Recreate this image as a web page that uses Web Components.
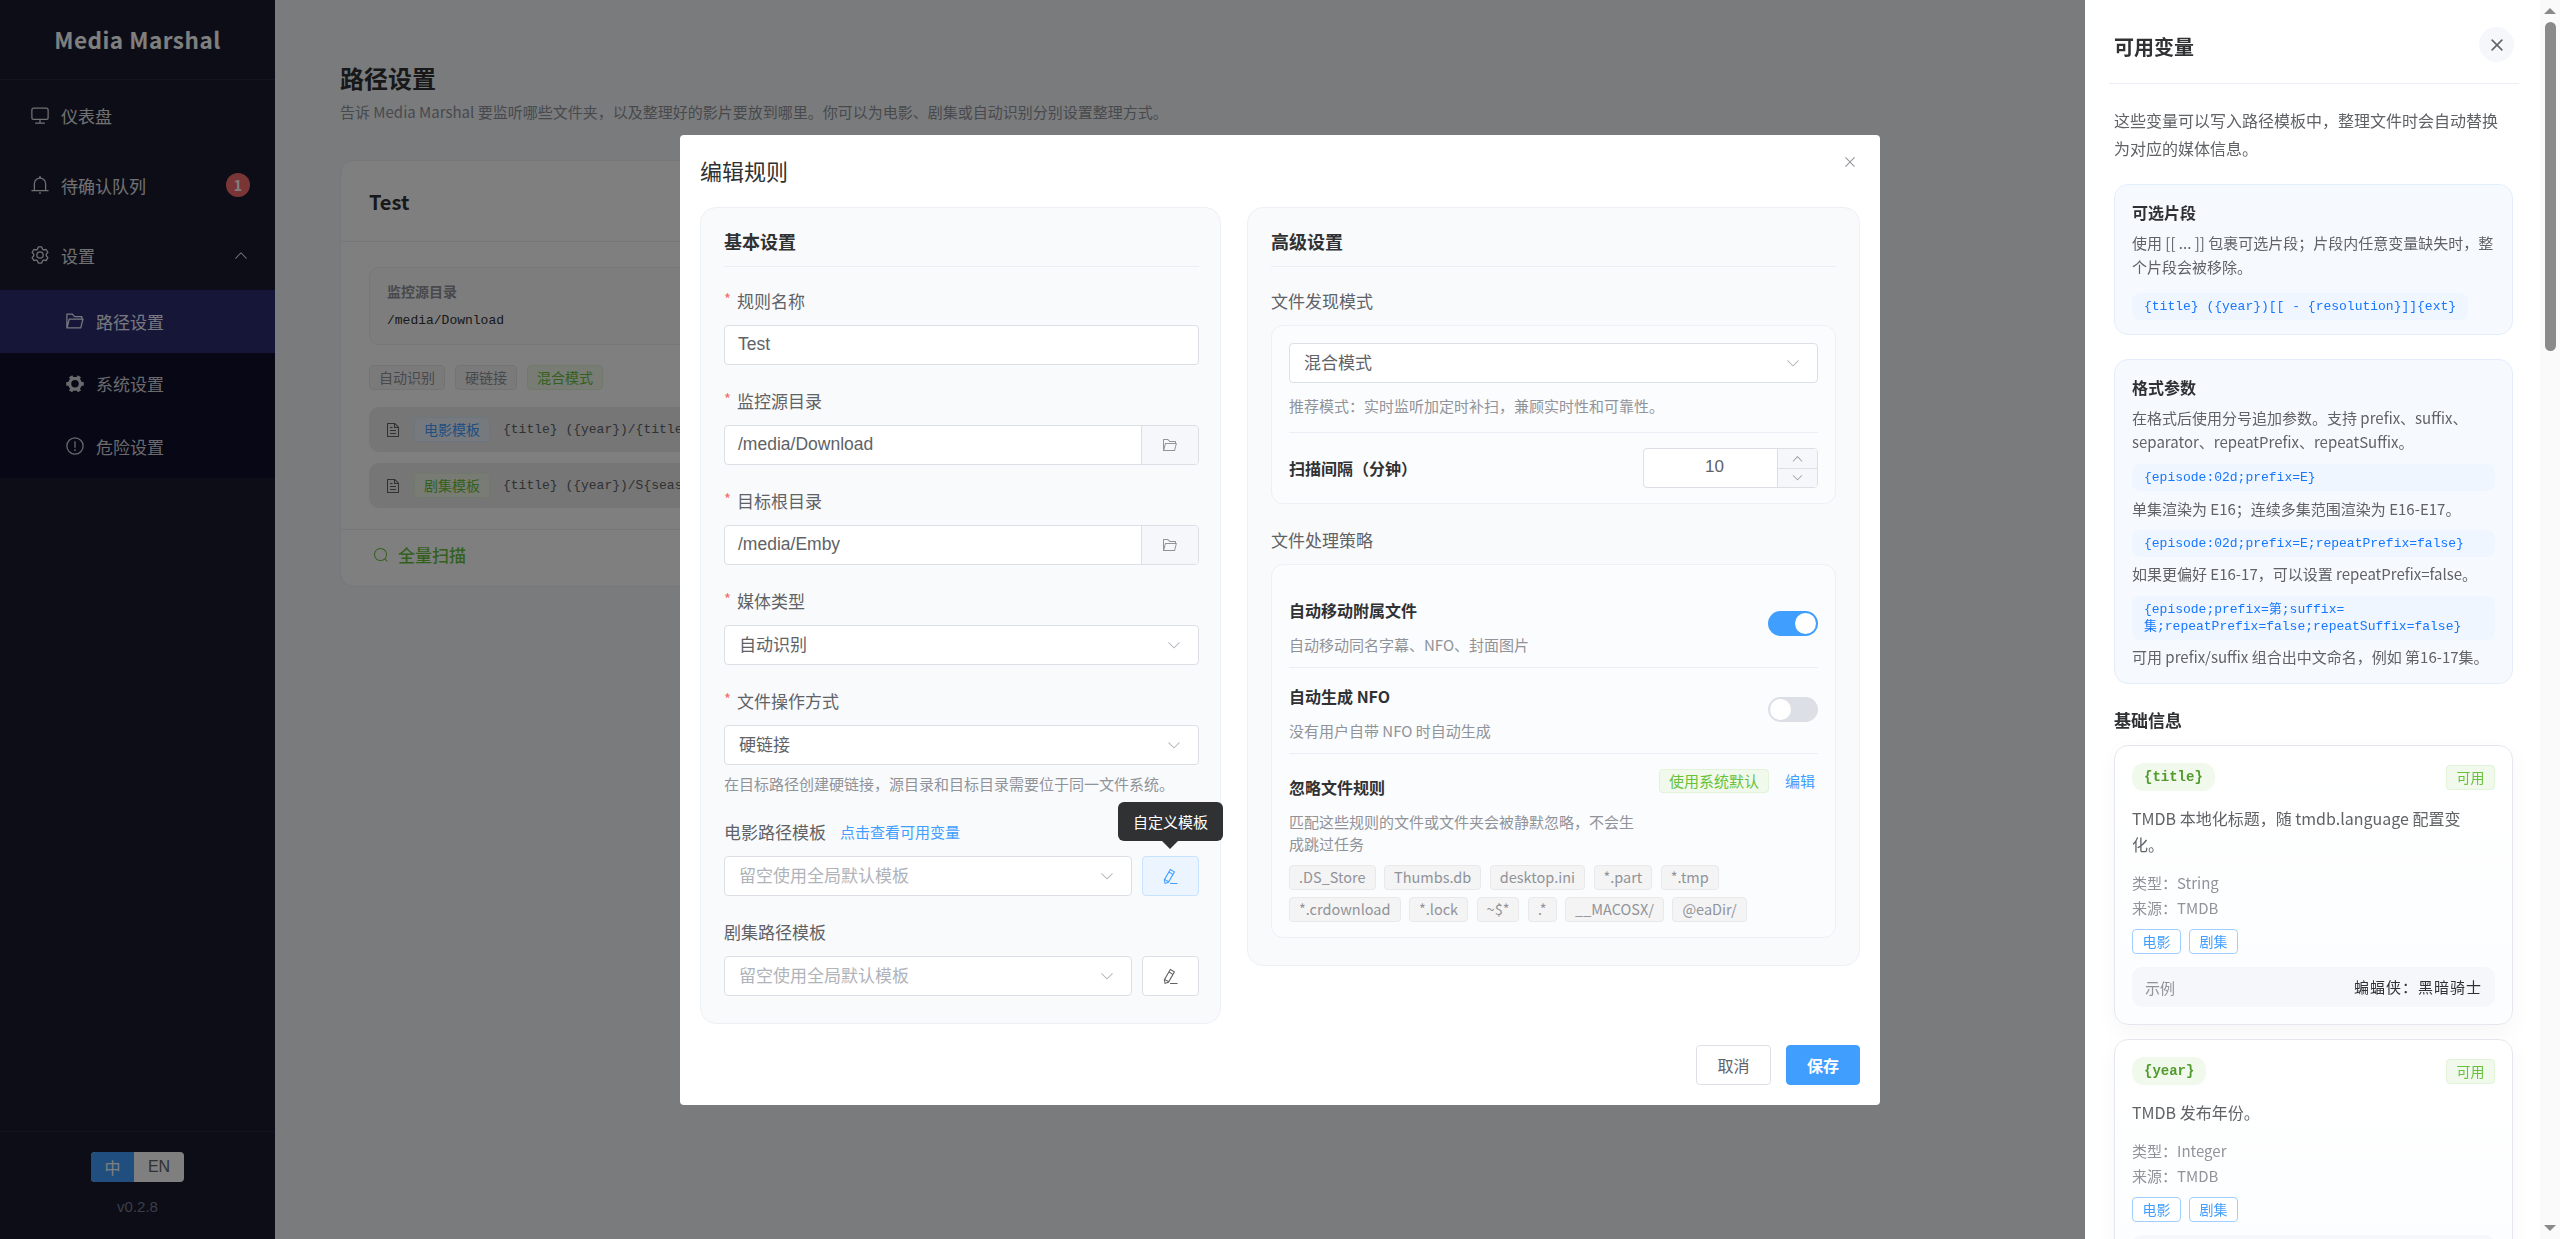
<!DOCTYPE html>
<html lang="zh">
<head>
<meta charset="utf-8">
<title>Media Marshal</title>
<style>
  html, body { margin: 0; height: 100%; overflow: hidden; }
  body { font-family: "Noto Sans CJK SC", "Noto Sans", sans-serif; color: #303133; background: #f5f7fa; }
</style>
</head>
<body>
<mm-app>
  <mm-sidebar slot="side">
    <mm-menu-item icon="monitor">仪表盘</mm-menu-item>
    <mm-menu-item icon="bell">待确认队列<mm-badge slot="extra">1</mm-badge></mm-menu-item>
    <mm-menu-item icon="setting">设置<mm-icon slot="extra" name="up" size="16" style="margin-right:-4px"></mm-icon></mm-menu-item>
    <mm-submenu>
      <mm-menu-item icon="folder" sub active>路径设置</mm-menu-item>
      <mm-menu-item icon="tools" sub>系统设置</mm-menu-item>
      <mm-menu-item icon="warning" sub>危险设置</mm-menu-item>
    </mm-submenu>
  </mm-sidebar>

  <mm-page-head>
    <span slot="title">路径设置</span>
    告诉 Media Marshal 要监听哪些文件夹，以及整理好的影片要放到哪里。你可以为电影、剧集或自动识别分别设置整理方式。
  </mm-page-head>
  <mm-rule-card></mm-rule-card>
</mm-app>

<mm-overlay></mm-overlay>

<mm-dialog>
  <span slot="title">编辑规则</span>

  <mm-panel heading="基本设置" style="padding-right:21px">
    <mm-field label="规则名称" required><mm-input value="Test"></mm-input></mm-field>
    <mm-field label="监控源目录" required><mm-input value="/media/Download" browse></mm-input></mm-field>
    <mm-field label="目标根目录" required><mm-input value="/media/Emby" browse></mm-input></mm-field>
    <mm-field label="媒体类型" required><mm-select value="自动识别"></mm-select></mm-field>
    <mm-field label="文件操作方式" required>
      <mm-select value="硬链接"></mm-select>
      <mm-hint style="margin-top:8px">在目标路径创建硬链接，源目录和目标目录需要位于同一文件系统。</mm-hint>
    </mm-field>
    <mm-field label="电影路径模板" style="margin-top:26px">
      <mm-link slot="extra">点击查看可用变量</mm-link>
      <mm-template-row active tooltip="自定义模板"></mm-template-row>
    </mm-field>
    <mm-field label="剧集路径模板"><mm-template-row></mm-template-row></mm-field>
  </mm-panel>

  <mm-panel heading="高级设置">
    <mm-field label="文件发现模式">
      <mm-subcard pad="mode">
        <mm-select value="混合模式"></mm-select>
        <mm-hint style="margin-top:12px">推荐模式：实时监听加定时补扫，兼顾实时性和可靠性。</mm-hint>
        <mm-scan-row>扫描间隔（分钟）</mm-scan-row>
      </mm-subcard>
    </mm-field>
    <mm-field label="文件处理策略">
      <mm-subcard pad="rows">
        <mm-option-row desc="自动移动同名字幕、NFO、封面图片" on>自动移动附属文件</mm-option-row>
        <mm-option-row desc="没有用户自带 NFO 时自动生成">自动生成 NFO</mm-option-row>
        <mm-ignore-rules>
          <mm-tag>.DS_Store</mm-tag><mm-tag>Thumbs.db</mm-tag><mm-tag>desktop.ini</mm-tag><mm-tag>*.part</mm-tag><mm-tag>*.tmp</mm-tag><mm-tag>*.crdownload</mm-tag><mm-tag>*.lock</mm-tag><mm-tag>~$*</mm-tag><mm-tag>.*</mm-tag><mm-tag>__MACOSX/</mm-tag><mm-tag>@eaDir/</mm-tag>
        </mm-ignore-rules>
      </mm-subcard>
    </mm-field>
  </mm-panel>

  <mm-btn slot="footer">取消</mm-btn>
  <mm-btn slot="footer" primary>保存</mm-btn>
</mm-dialog>

<mm-drawer>
  <span slot="title">可用变量</span>
  <mm-intro>这些变量可以写入路径模板中，整理文件时会自动替换为对应的媒体信息。</mm-intro>

  <mm-info-box heading="可选片段">
    <mm-info-text>使用 [[ ... ]] 包裹可选片段；片段内任意变量缺失时，整个片段会被移除。</mm-info-text>
    <mm-code fit style="margin-top:14px">{title} ({year})[[ - {resolution}]]{ext}</mm-code>
  </mm-info-box>

  <mm-info-box heading="格式参数" style="margin-top:24px">
    <mm-info-text>在格式后使用分号追加参数。支持 prefix、suffix、separator、repeatPrefix、repeatSuffix。</mm-info-text>
    <mm-code style="margin-top:10px">{episode:02d;prefix=E}</mm-code>
    <mm-info-text style="margin-top:6px">单集渲染为 E16；连续多集范围渲染为 E16-E17。</mm-info-text>
    <mm-code style="margin-top:9px">{episode:02d;prefix=E;repeatPrefix=false}</mm-code>
    <mm-info-text style="margin-top:5px">如果更偏好 E16-17，可以设置 repeatPrefix=false。</mm-info-text>
    <mm-code style="margin-top:10px">{episode;prefix=第;suffix=<br>集;repeatPrefix=false;repeatSuffix=false}</mm-code>
    <mm-info-text style="margin-top:5px">可用 prefix/suffix 组合出中文命名，例如 第16-17集。</mm-info-text>
  </mm-info-box>

  <mm-section-title>基础信息</mm-section-title>

  <mm-var-card name="{title}" kind="String" source="TMDB" example="蝙蝠侠：黑暗骑士">TMDB 本地化标题，随 tmdb.language 配置变<br>化。</mm-var-card>
  <mm-var-card name="{year}" kind="Integer" source="TMDB" style="margin-top:14px">TMDB 发布年份。</mm-var-card>
</mm-drawer>

<script>
const ICONS = {
  monitor: 'M544 768v128h192a32 32 0 1 1 0 64H288a32 32 0 1 1 0-64h192V768H192A128 128 0 0 1 64 640V256a128 128 0 0 1 128-128h640a128 128 0 0 1 128 128v384a128 128 0 0 1-128 128H544zM192 192a64 64 0 0 0-64 64v384a64 64 0 0 0 64 64h640a64 64 0 0 0 64-64V256a64 64 0 0 0-64-64H192z',
  bell: 'M512 64a64 64 0 0 1 64 64v64H448v-64a64 64 0 0 1 64-64zM256 768h512V448a256 256 0 1 0-512 0v320zm256-640a320 320 0 0 1 320 320v384H192V448a320 320 0 0 1 320-320zM96 768h832q32 0 32 32t-32 32H96q-32 0-32-32t32-32zm352 128h128a64 64 0 0 1-128 0z',
  setting: 'M600.704 64a32 32 0 0 1 30.464 22.208l35.2 109.376c14.784 7.232 28.928 15.36 42.432 24.512l112.384-24.192a32 32 0 0 1 34.432 15.36L944.32 364.8a32 32 0 0 1-4.032 37.504l-77.12 85.12a357.12 357.12 0 0 1 0 49.024l77.12 85.248a32 32 0 0 1 4.032 37.504l-88.704 153.6a32 32 0 0 1-34.432 15.296L708.8 803.904c-13.44 9.088-27.648 17.28-42.368 24.512l-35.264 109.376A32 32 0 0 1 600.704 960H423.296a32 32 0 0 1-30.464-22.208L357.696 828.48a351.616 351.616 0 0 1-42.56-24.64l-112.32 24.256a32 32 0 0 1-34.432-15.36L79.68 659.2a32 32 0 0 1 4.032-37.504l77.12-85.248a357.12 357.12 0 0 1 0-48.896l-77.12-85.248A32 32 0 0 1 79.68 364.8l88.704-153.6a32 32 0 0 1 34.432-15.296l112.32 24.256c13.568-9.152 27.776-17.408 42.56-24.64l35.2-109.312A32 32 0 0 1 423.232 64H600.64zm-23.424 64H446.72l-36.352 113.088-24.512 11.968a294.113 294.113 0 0 0-34.816 20.096l-22.656 15.36-116.224-25.088-65.28 113.152 79.68 88.192-1.92 27.136a293.12 293.12 0 0 0 0 40.192l1.92 27.136-79.808 88.192 65.344 113.152 116.224-25.024 22.656 15.296a294.113 294.113 0 0 0 34.816 20.096l24.512 11.968L446.72 896h130.688l36.48-113.152 24.448-11.904a288.282 288.282 0 0 0 34.752-20.096l22.592-15.296 116.288 25.024 65.28-113.152-79.744-88.192 1.92-27.136a293.12 293.12 0 0 0 0-40.256l-1.92-27.136 79.808-88.128-65.344-113.152-116.288 24.96-22.592-15.232a287.616 287.616 0 0 0-34.752-20.096l-24.448-11.904L577.344 128zM512 320a192 192 0 1 1 0 384 192 192 0 0 1 0-384zm0 64a128 128 0 1 0 0 256 128 128 0 0 0 0-256z',
  tools: 'M764.416 254.72a351.68 351.68 0 0 1 86.336 149.184H960v192.064H850.752a351.68 351.68 0 0 1-86.336 149.312l54.72 94.72-166.272 96-54.592-94.72a352.64 352.64 0 0 1-172.48 0L371.136 936l-166.272-96 54.72-94.72a351.68 351.68 0 0 1-86.336-149.312H64v-192h109.248a351.68 351.68 0 0 1 86.336-149.312L204.8 160l166.208-96h.192l54.656 94.592a352.64 352.64 0 0 1 172.48 0L652.8 64h.128L819.2 160l-54.72 94.72zM704 499.968a192 192 0 1 0-384 0 192 192 0 0 0 384 0z',
  folder: 'M878.08 448H241.92l-96 384h636.16l96-384zM832 384v-64H485.76L357.504 192H128v448l57.92-231.744A32 32 0 0 1 216.96 384H832zm-24.96 512H96a32 32 0 0 1-32-32V160a32 32 0 0 1 32-32h287.872l128.384 128H864a32 32 0 0 1 32 32v96h23.04a32 32 0 0 1 31.04 39.744l-112 448A32 32 0 0 1 807.04 896z',
  warning: 'M512 64a448 448 0 1 1 0 896 448 448 0 0 1 0-896zm0 832a384 384 0 0 0 0-768 384 384 0 0 0 0 768zm48-176a48 48 0 1 1-96 0 48 48 0 0 1 96 0zm-48-464a32 32 0 0 1 32 32v288a32 32 0 0 1-64 0V288a32 32 0 0 1 32-32z',
  document: 'M832 384H576V128H192v768h640V384zm-26.496-64L640 154.496V320h165.504zM160 64h480l256 256v608a32 32 0 0 1-32 32H160a32 32 0 0 1-32-32V96a32 32 0 0 1 32-32zm160 448h384v64H320v-64zm0-192h160v64H320v-64zm0 384h384v64H320v-64z',
  search: 'm795.904 750.72 124.992 124.928a32 32 0 0 1-45.248 45.248L750.656 795.904a416 416 0 1 1 45.248-45.248zM480 832a352 352 0 1 0 0-704 352 352 0 0 0 0 704z',
  down: 'M831.872 340.864 512 652.672 192.128 340.864a30.592 30.592 0 0 0-42.752 0 29.12 29.12 0 0 0 0 41.6L489.664 714.24a32 32 0 0 0 44.672 0l340.288-331.712a29.12 29.12 0 0 0 0-41.728 30.592 30.592 0 0 0-42.752 0z',
  up: 'M488.832 344.32l-339.84 356.672a32 32 0 0 0 0 44.16l.384.384a29.44 29.44 0 0 0 42.688 0l320-335.872 319.872 335.872a29.44 29.44 0 0 0 42.688 0l.384-.384a32 32 0 0 0 0-44.16L535.168 344.32a32 32 0 0 0-46.336 0z',
  close: 'M764.288 214.592 512 466.88 259.712 214.592a31.936 31.936 0 0 0-45.12 45.12L466.752 512 214.528 764.224a31.936 31.936 0 1 0 45.12 45.184L512 557.184l252.288 252.288a31.936 31.936 0 0 0 45.12-45.12L557.12 512.064l252.288-252.352a31.936 31.936 0 1 0-45.12-45.184z',
  pen: 'm199.04 672.64 193.984 112 224-387.968-193.92-112-224 388.032zm-23.872 60.16 32.896 148.288 144.896-45.696L175.168 732.8zM455.04 229.248l193.92 112 56.704-98.112-193.984-112-56.64 98.112zM104.32 708.8l384-665.024 304.768 175.936L409.152 884.8h.064l-248.448 78.336L104.32 708.8zm384 254.272v-64h448v64h-448z'
}

const MONO = '"Liberation Mono", "Noto Sans CJK SC", monospace'
const ARIAL = '"Liberation Sans", "Noto Sans CJK SC", sans-serif'

/**
 * Registers a custom element whose shadow root is built from css and html.
 * html may be a function of the element, for the ones driven by attributes.
 */
function component(name, css, html = '<slot></slot>') {
  customElements.define(name, class extends HTMLElement {
    constructor() {
      super()
      this.attachShadow({ mode: 'open' })
    }

    connectedCallback() {
      const body = typeof html === 'function' ? html(this) : html
      this.shadowRoot.innerHTML = `<style>:host { box-sizing: border-box; } * { box-sizing: border-box; } ${css}</style>${body}`
    }
  })
}

component('mm-icon', `
  :host { display: inline-flex; flex: none; }
  svg { display: block; fill: currentColor; }
`, el => {
  const size = el.getAttribute('size') || 16
  return `<svg width="${size}" height="${size}" viewBox="0 0 1024 1024"><path d="${ICONS[el.getAttribute('name')]}"/></svg>`
})

component('mm-app', `
  :host { display: flex; height: 1239px; }
  main { flex: 1; padding: 61px 0 0 65px; min-width: 0; }
`, '<slot name="side"></slot><main><slot></slot></main>')

component('mm-sidebar', `
  :host { display: flex; flex-direction: column; flex: none; width: 275px; height: 100%; background: #191b2e; color: #e2e3e8; }
  header { height: 80px; padding-bottom: 1px; border-bottom: 1px solid #26283f; display: flex; align-items: center; justify-content: center; color: #fff; font-size: 22.5px; font-weight: 700; letter-spacing: .5px; }
  nav { flex: 1; }
  footer { height: 108px; border-top: 1px solid #26283f; padding-top: 20px; display: flex; flex-direction: column; align-items: center; }
  .lang { display: flex; height: 30px; width: 93px; border-radius: 4px; overflow: hidden; font: 16px ${ARIAL}; background: #fff; color: #606266; }
  .lang span { display: flex; align-items: center; justify-content: center; }
  .lang .on { width: 43px; background: #409eff; color: #fff; }
  .lang .off { flex: 1; }
  .ver { margin-top: 14px; font: 15px/22px ${ARIAL}; color: #777a90; }
`, `
  <header>Media Marshal</header>
  <nav><slot></slot></nav>
  <footer>
    <div class="lang"><span class="on">中</span><span class="off">EN</span></div>
    <div class="ver">v0.2.8</div>
  </footer>
`)

component('mm-submenu', ':host { display: block; background: #0f0f2b; }')

component('mm-menu-item', `
  :host { display: flex; align-items: center; height: 70px; padding: 0 30px; font-size: 17px; color: #e2e3e8; }
  :host([sub]) { height: 62.6px; padding-left: 65px; color: #d4d5dc; }
  :host([active]) { background: #2d2f70; color: #f0f0ff; }
  .label { margin-left: 11px; flex: 1; }
`, el => `<mm-icon name="${el.getAttribute('icon')}" size="20"></mm-icon><span class="label"><slot></slot></span><slot name="extra"></slot>`)

component('mm-badge', `
  :host { display: flex; align-items: center; justify-content: center; width: 24px; height: 24px; margin-right: -5px; border-radius: 50%; background: #f56c6c; color: #fff; font-size: 14px; font-weight: 700; }
`)

component('mm-page-head', `
  :host { display: block; }
  h1 { margin: 0; font-size: 24px; line-height: 34px; font-weight: 700; color: #303133; }
  p { margin: 6px 0 0; font-size: 15px; line-height: 22px; color: #909399; }
`, '<h1><slot name="title"></slot></h1><p><slot></slot></p>')

component('mm-rule-card', `
  :host { display: block; width: 1100px; margin-top: 37px; background: #fff; border: 1px solid #ebeef5; border-radius: 14px; }
  .head { height: 81px; padding: 26px 28px 0; border-bottom: 1px solid #ebeef5; font-size: 20px; line-height: 30px; font-weight: 700; }
  .body { padding: 25px 28px 21px; }
  .path { height: 78px; padding: 12px 17px; background: #fafafa; border: 1px solid #ebeef5; border-radius: 10px; }
  .path b { display: block; font-size: 14px; line-height: 22px; color: #909399; }
  .path code { display: block; margin-top: 8px; font: 13px/22px ${MONO}; color: #303133; }
  .tags { display: flex; gap: 10px; margin-top: 20px; }
  .t { display: block; height: 25px; padding: 0 9px; border-radius: 4px; font-size: 14px; line-height: 23px; border: 1px solid #e9e9eb; background: #f4f4f5; color: #909399; }
  .t.g { border-color: #e1f3d8; background: #f0f9eb; color: #67c23a; }
  .t.b { border-color: #d9ecff; background: #ecf5ff; color: #409eff; }
  .row { display: flex; align-items: center; gap: 13px; height: 45px; margin-top: 11px; padding: 0 16px; background: #ececec; border-radius: 10px; color: #606266; white-space: nowrap; }
  .tags + .row { margin-top: 17px; }
  .row code { font: 13px ${MONO}; color: #606266; }
  .foot { display: flex; align-items: center; gap: 9px; height: 57px; padding: 0 32px 7px; border-top: 1px solid #ebeef5; color: #67c23a; font-size: 17px; font-weight: 500; }
`, `
  <div class="head">Test</div>
  <div class="body">
    <div class="path"><b>监控源目录</b><code>/media/Download</code></div>
    <div class="tags"><span class="t">自动识别</span><span class="t">硬链接</span><span class="t g">混合模式</span></div>
    <div class="row"><mm-icon name="document" size="16"></mm-icon><span class="t b">电影模板</span><code>{title} ({year})/{title} ({year}){ext}</code></div>
    <div class="row"><mm-icon name="document" size="16"></mm-icon><span class="t g">剧集模板</span><code>{title} ({year})/S{season:02d}/{title}</code></div>
  </div>
  <div class="foot"><mm-icon name="search" size="16"></mm-icon>全量扫描</div>
`)

component('mm-overlay', ':host { position: fixed; inset: 0; background: rgba(0, 0, 0, .5); }', '')

component('mm-dialog', `
  :host { position: fixed; left: 680px; top: 135px; width: 1200px; height: 970px; display: flex; flex-direction: column; padding: 20px 20px 20px; background: #fff; border-radius: 4px; }
  h2 { margin: 0; font-size: 22px; line-height: 30px; font-weight: 400; color: #303133; }
  .close { position: absolute; top: 19px; right: 22px; color: #909399; }
  .body { display: grid; grid-template-columns: 521px 613px; column-gap: 26px; align-items: start; margin-top: 22px; }
  footer { display: flex; justify-content: flex-end; gap: 15px; margin-top: auto; }
`, `
  <h2><slot name="title"></slot></h2>
  <mm-icon class="close" name="close" size="16"></mm-icon>
  <div class="body"><slot></slot></div>
  <footer><slot name="footer"></slot></footer>
`)

component('mm-panel', `
  :host { display: block; padding: 0 23px 27px; background: #f9fafc; border: 1px solid #edf0f5; border-radius: 16px; }
  h3 { margin: 0; padding: 20px 0 12px; font-size: 18px; line-height: 26px; font-weight: 700; color: #303133; border-bottom: 1px solid #ebeef5; margin-bottom: -2px; }
`, el => `<h3>${el.getAttribute('heading')}</h3><slot></slot>`)

component('mm-field', `
  :host { display: block; margin-top: 25px; }
  .label { display: flex; align-items: center; height: 24px; padding-bottom: 3px; margin-bottom: 11px; font-size: 17px; color: #606266; }
  .req { width: 13px; color: #f56c6c; font-size: 15px; margin-right: 0; position: relative; top: -2px; }
`, el => `
  <div class="label">${el.hasAttribute('required') ? '<span class="req">*</span>' : ''}<span>${el.getAttribute('label')}</span><slot name="extra"></slot></div>
  <slot></slot>
`)

component('mm-link', ':host { display: inline-block; margin-left: 14px; font-size: 15px; color: #409eff; }')

component('mm-hint', ':host { display: block; font-size: 15px; line-height: 22px; color: #909399; }')

component('mm-input', `
  :host { display: flex; height: 40px; background: #fff; border: 1px solid #dcdfe6; border-radius: 4px; font: 17.5px ${ARIAL}; color: #606266; overflow: hidden; }
  .v { flex: 1; padding: 0 13px; line-height: 36px; }
  .b { width: 57px; display: flex; align-items: center; justify-content: center; background: #f5f7fa; border-left: 1px solid #dcdfe6; color: #909399; }
`, el => `<div class="v">${el.getAttribute('value')}</div>${el.hasAttribute('browse') ? '<div class="b"><mm-icon name="folder" size="16"></mm-icon></div>' : ''}`)

component('mm-select', `
  :host { display: flex; align-items: center; justify-content: space-between; flex: 1; height: 40px; padding: 0 16px 3px 14px; background: #fff; border: 1px solid #dcdfe6; border-radius: 4px; font-size: 17px; color: #606266; }
  :host([placeholder]) { color: #b0b3b9; }
  mm-icon { color: #b4b7bd; margin-top: 3px; }
`, el => `<span>${el.getAttribute('value') || el.getAttribute('placeholder')}</span><mm-icon name="down" size="16"></mm-icon>`)

component('mm-template-row', `
  :host { display: flex; gap: 10px; }
  .btn { position: relative; width: 57px; height: 40px; display: flex; align-items: center; justify-content: center; background: #fff; border: 1px solid #dcdfe6; border-radius: 4px; color: #606266; }
  .btn.on { background: #ecf5ff; border-color: #c6e2ff; color: #409eff; }
  .tip { position: absolute; right: -25px; bottom: 54px; width: 105px; height: 39px; display: flex; align-items: center; justify-content: center; background: #303133; color: #fff; border-radius: 6px; font-size: 15px; }
  .tip::after { content: ""; position: absolute; left: 44px; bottom: -8px; border: 8px solid transparent; border-bottom: 0; border-top-color: #303133; }
`, el => `
  <mm-select placeholder="留空使用全局默认模板"></mm-select>
  <div class="btn ${el.hasAttribute('active') ? 'on' : ''}">
    <mm-icon name="pen" size="17"></mm-icon>
    ${el.getAttribute('tooltip') ? `<div class="tip">${el.getAttribute('tooltip')}</div>` : ''}
  </div>
`)

component('mm-subcard', `
  :host { display: block; background: #fbfcfd; border: 1px solid #edf0f5; border-radius: 12px; padding: 17px 17px 15px; }
`)

component('mm-scan-row', `
  :host { display: flex; align-items: center; justify-content: space-between; margin-top: 15px; padding-top: 15px; border-top: 1px solid #ebeef5; font-size: 16px; font-weight: 700; color: #303133; }
  .num { display: flex; width: 175px; height: 40px; background: #fff; border: 1px solid #dcdfe6; border-radius: 4px; overflow: hidden; font: 400 17px ${ARIAL}; color: #606266; }
  .v { flex: 1; padding-left: 8px; text-align: center; line-height: 36px; }
  .s { width: 40px; display: flex; flex-direction: column; background: #f5f7fa; border-left: 1px solid #dcdfe6; color: #909399; }
  .s div { flex: 1; display: flex; align-items: center; justify-content: center; }
  .s div + div { border-top: 1px solid #dcdfe6; }
`, `
  <span><slot></slot></span>
  <div class="num"><div class="v">10</div><div class="s"><div><mm-icon name="up" size="13"></mm-icon></div><div><mm-icon name="down" size="13"></mm-icon></div></div></div>
`)

component('mm-switch', `
  :host { display: flex; align-items: center; flex: none; width: 50px; height: 25px; padding: 2px; margin-top: -2px; background: #dcdfe6; border-radius: 13px; }
  :host([on]) { background: #409eff; justify-content: flex-end; }
  i { display: block; width: 21px; height: 21px; border-radius: 50%; background: #fff; }
`, '<i></i>')

component('mm-option-row', `
  :host { display: flex; align-items: center; justify-content: space-between; height: 86px; border-bottom: 1px solid #ebeef5; }
  .txt { margin-top: 5px; }
  .t { font-size: 16px; line-height: 24px; font-weight: 700; color: #303133; }
  .d { margin-top: 12px; font-size: 15px; line-height: 22px; color: #909399; }
`, el => `
  <div class="txt"><div class="t"><slot></slot></div><div class="d">${el.getAttribute('desc')}</div></div>
  <mm-switch ${el.hasAttribute('on') ? 'on' : ''}></mm-switch>
`)

component('mm-ignore-rules', `
  :host { display: block; padding-top: 15px; }
  .top { display: flex; justify-content: space-between; align-items: flex-start; }
  .l { width: 350px; padding-top: 6px; }
  .t { font-size: 16px; line-height: 24px; font-weight: 700; color: #303133; }
  .d { margin-top: 12px; font-size: 15px; line-height: 22px; color: #909399; }
  .r { display: flex; align-items: center; gap: 16px; margin-right: 3px; }
  .sys { height: 24px; padding: 0 9px; border: 1px solid #e1f3d8; border-radius: 4px; background: #f0f9eb; color: #67c23a; font-size: 15px; line-height: 22px; }
  .edit { font-size: 15px; color: #409eff; line-height: 22px; }
  .tags { display: flex; flex-wrap: wrap; gap: 7px 8.5px; margin-top: 10px; }
`, `
  <div class="top">
    <div class="l"><div class="t">忽略文件规则</div><div class="d">匹配这些规则的文件或文件夹会被静默忽略，不会生成跳过任务</div></div>
    <div class="r"><span class="sys">使用系统默认</span><span class="edit">编辑</span></div>
  </div>
  <div class="tags"><slot></slot></div>
`)

component('mm-tag', `
  :host { display: block; height: 25px; padding: 0 9px; border: 1px solid #e9e9eb; border-radius: 4px; background: #f4f4f5; color: #909399; font-size: 14.5px; line-height: 22px; }
`)

component('mm-btn', `
  :host { display: flex; align-items: center; justify-content: center; width: 75px; height: 40px; background: #fff; border: 1px solid #dcdfe6; border-radius: 4px; color: #606266; font-size: 16px; }
  :host([primary]) { width: 74px; background: #409eff; border-color: #409eff; color: #fff; font-weight: 700; }
`)

component('mm-drawer', `
  :host { position: fixed; top: 0; right: 0; bottom: 0; width: 475px; display: flex; background: #fff; }
  .content { flex: 1; min-width: 0; overflow: hidden; padding: 0 21px 0 24px; }
  header { position: relative; display: flex; align-items: center; justify-content: space-between; height: 84px; padding: 0 5px 0 5px; border-bottom: 1px solid #ebeef5; }
  h2 { margin: 0; font-size: 20px; font-weight: 700; color: #303133; line-height: 30px; margin-top: 10px; }
  .x { width: 35px; height: 35px; margin-top: 6px; border-radius: 50%; background: #f5f7fa; display: flex; align-items: center; justify-content: center; color: #606266; }
  .x mm-icon { stroke: #606266; stroke-width: 40; }
  .body { padding: 22px 6px 0 5px; }
  .bar { flex: none; width: 20px; display: flex; flex-direction: column; align-items: center; background: #fafafa; }
  .up, .dn { width: 0; height: 0; border: 6.5px solid transparent; }
  .up { margin-top: 8px; border-top: 0; border-bottom-color: #8a8a8a; }
  .thumb { width: 11px; height: 329px; margin-top: 8px; border-radius: 6px; background: #8a8a8a; }
  .dn { margin-top: auto; margin-bottom: 8px; border-bottom: 0; border-top-color: #8a8a8a; }
`, `
  <div class="content">
    <header><h2><slot name="title"></slot></h2><div class="x"><mm-icon name="close" size="18"></mm-icon></div></header>
    <div class="body"><slot></slot></div>
  </div>
  <div class="bar"><i class="up"></i><i class="thumb"></i><i class="dn"></i></div>
`)

component('mm-intro', ':host { display: block; font-size: 16px; line-height: 28px; color: #606266; }')

component('mm-info-box', `
  :host { display: block; margin-top: 22px; padding: 16px 17px 14px; background: #f6faff; border: 1px solid #e3eefc; border-radius: 14px; }
  h4 { margin: 0 0 8px; font-size: 16px; line-height: 22px; font-weight: 700; color: #303133; }
`, el => `<h4>${el.getAttribute('heading')}</h4><slot></slot>`)

component('mm-info-text', ':host { display: block; font-size: 15px; line-height: 24px; color: #606266; }')

component('mm-code', `
  :host { display: block; padding: 5px 12px; background: #eff6ff; border-radius: 8px; font: 13px/17px ${MONO}; color: #1677ff; }
  :host([fit]) { width: fit-content; }
`)

component('mm-section-title', ':host { display: block; margin-top: 23px; margin-bottom: 12px; font-size: 17px; line-height: 26px; font-weight: 700; color: #303133; }')

component('mm-var-card', `
  :host { display: block; padding: 17px 17px 17px; background: linear-gradient(#fff, #fcfdff); border: 1px solid #e4e7ed; border-radius: 14px; box-shadow: 0 8px 24px rgba(0, 0, 0, .04); }
  .top { display: flex; align-items: center; justify-content: space-between; }
  .name { height: 28px; padding: 0 12px; border-radius: 12px; background: #f0f9eb; color: #529b2e; font: 700 14px/28px ${MONO}; }
  .ok { width: 49px; height: 25px; text-align: center; border: 1px solid #e1f3d8; border-radius: 4px; background: #f0f9eb; color: #67c23a; font-size: 14px; line-height: 23px; }
  .desc { margin-top: 14px; font-size: 16px; line-height: 26px; color: #606266; }
  .meta { margin-top: 13px; font-size: 15px; line-height: 25px; color: #909399; }
  .media { display: flex; gap: 8px; margin-top: 9px; }
  .media span { width: 49px; height: 25px; text-align: center; background: #fff; border: 1px solid #a0cfff; border-radius: 4px; color: #409eff; font-size: 14px; line-height: 23px; }
  .ex { display: flex; align-items: center; justify-content: space-between; height: 40px; margin-top: 13px; padding: 0 13px; background: #f5f7fa; border-radius: 10px; font-size: 15px; color: #909399; }
  .ex code { font: 15px ${MONO}; letter-spacing: 1px; color: #303133; }
`, el => `
  <div class="top"><span class="name">${el.getAttribute('name')}</span><span class="ok">可用</span></div>
  <div class="desc"><slot></slot></div>
  <div class="meta">类型：${el.getAttribute('kind')}<br>来源：${el.getAttribute('source')}</div>
  <div class="media"><span>电影</span><span>剧集</span></div>
  <div class="ex">${el.getAttribute('example') ? `<span>示例</span><code>${el.getAttribute('example')}</code>` : ''}</div>
`)
</script>
</body>
</html>
